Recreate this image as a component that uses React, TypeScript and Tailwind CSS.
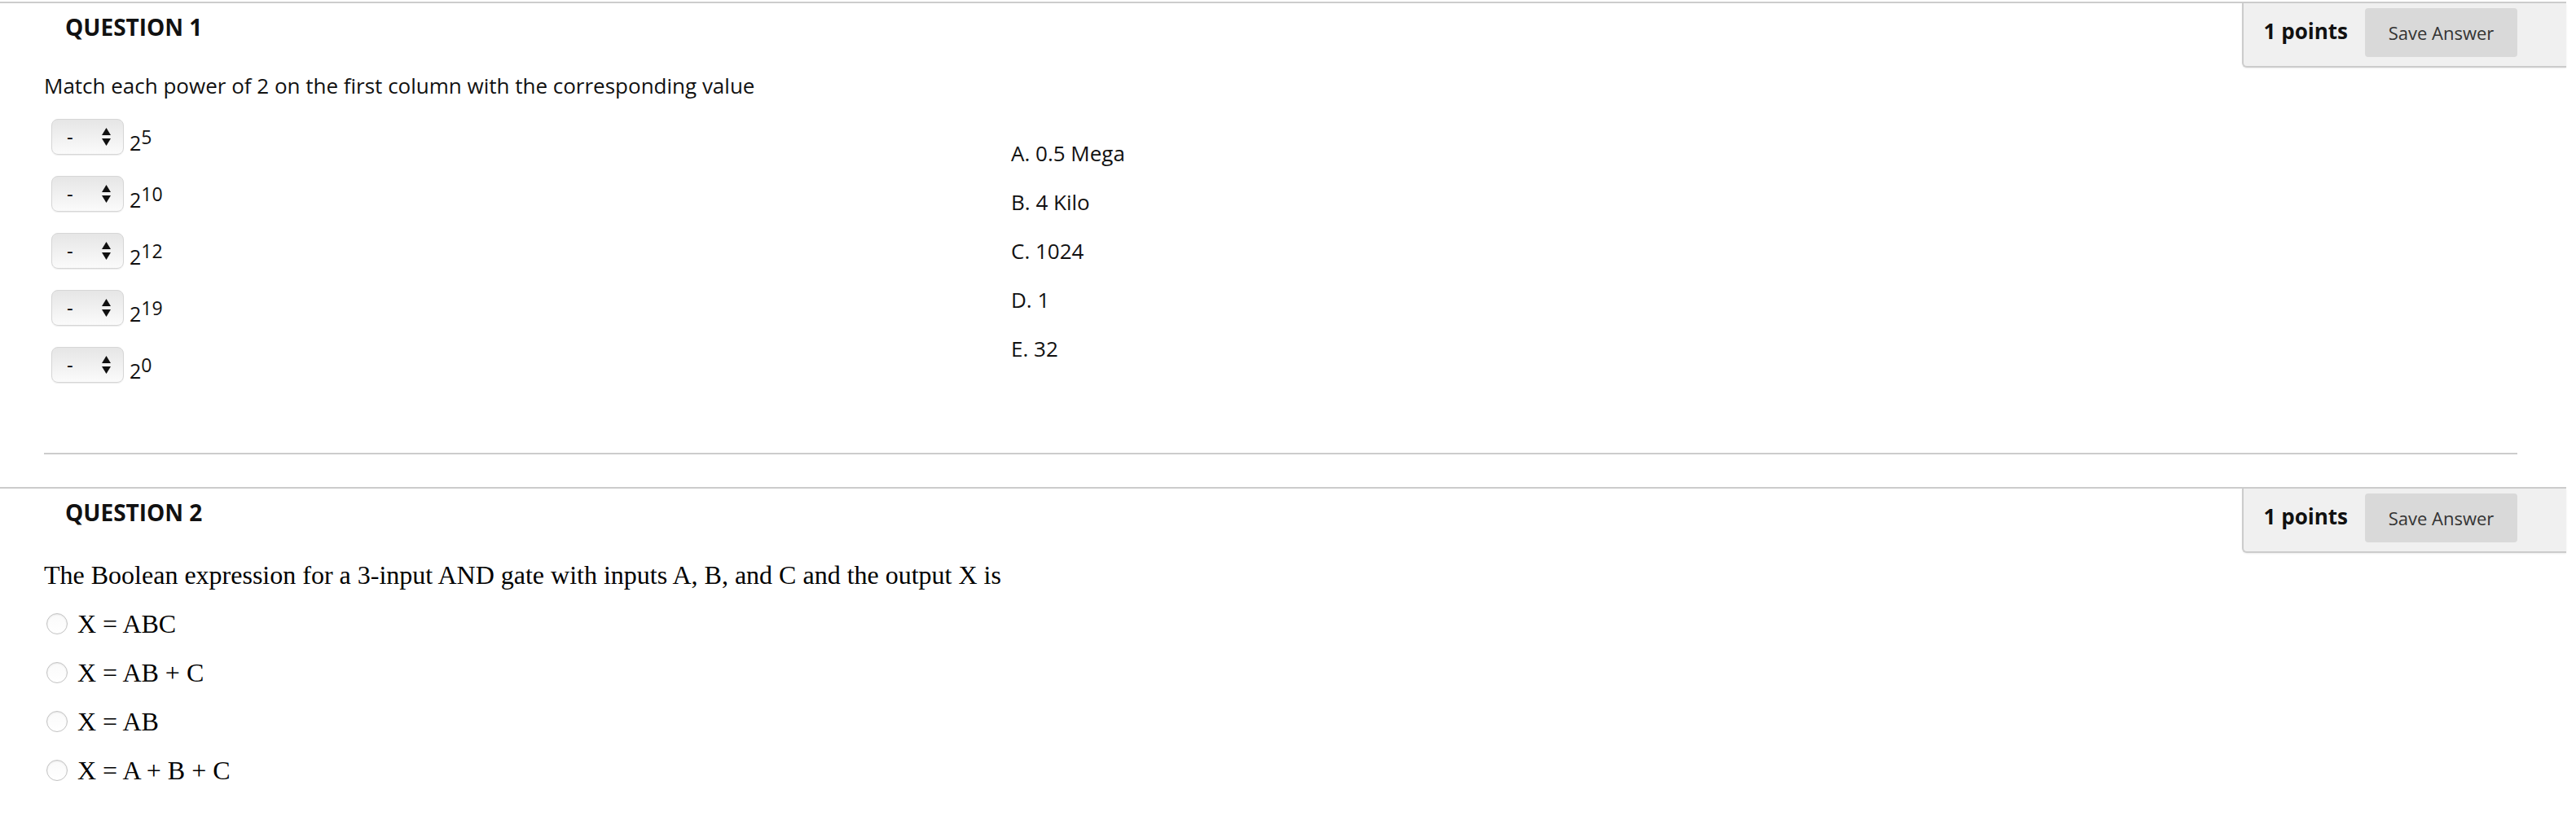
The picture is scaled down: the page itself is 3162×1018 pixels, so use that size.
const powers = ["5", "10", "12", "19", "0"];
const answers = ["A. 0.5 Mega", "B. 4 Kilo", "C. 1024", "D. 1", "E. 32"];
const options = ["X = ABC", "X = AB + C", "X = AB", "X = A + B + C"];

function PointsPanel() {
  return (
    <div className="flex h-[79px] items-start rounded-bl-[6px] border-b-2 border-l-2 border-[#cccccc] bg-[#f0f0f0] pl-[25px] pr-[60px] pt-[6px] shadow-[0_1px_2px_rgba(0,0,0,0.08)]">
      <span className="mt-[10px] text-[26px] font-bold leading-[36px] text-[#111]">
        1 points
      </span>
      <button className="ml-[21px] flex h-[60px] w-[187px] items-center justify-center rounded-[4px] bg-[#d9d9d9] text-[22px] text-[#333]">
        Save Answer
      </button>
    </div>
  );
}

function QuestionHeader({ n }: { n: number }) {
  return (
    <div className="flex h-[79px] items-start justify-between">
      <h2 className="pl-[80px] pt-[11px] text-[28px] font-bold leading-[36px] text-[#111]">
        QUESTION {n}
      </h2>
      <PointsPanel />
    </div>
  );
}

function FakeSelect() {
  return (
    <div className="flex h-[44px] w-[89px] items-center justify-between rounded-[8px] border border-[#d6d6d6] bg-gradient-to-b from-[#e6e6e6] to-[#fbfbfb] pl-[18px] pr-[15px] shadow-[0_1px_1px_rgba(0,0,0,0.08)]">
      <span className="text-[24px] leading-none text-black">-</span>
      <svg width="11" height="22" viewBox="0 0 11 22">
        <path d="M5.5 0 L11 9 L0 9 Z" fill="#111" />
        <path d="M0 13 L11 13 L5.5 22 Z" fill="#111" />
      </svg>
    </div>
  );
}

function Radio() {
  return (
    <span className="ml-[3px] mr-[12px] inline-block h-[26px] w-[26px] rounded-full border border-[#c2c2c2] bg-gradient-to-b from-[#fafafa] to-white shadow-[inset_0_1px_2px_rgba(0,0,0,0.08)]" />
  );
}

export default function App() {
  return (
    <div className="w-[3150px] bg-white pt-[2px] font-['Open_Sans',sans-serif]">
      {/* question 1 */}
      <section className="border-t-2 border-[#cccccc]">
        <QuestionHeader n={1} />
        <div className="mr-[60px] pl-[54px]">
          <p className="mt-[5px] text-[26px] leading-[34px] text-[#111]">
            Match each power of 2 on the first column with the corresponding value
          </p>
          <div className="mt-[24px] flex items-center">
            <div className="flex w-[1187px] flex-col gap-[26px] pl-[9px]">
              {powers.map((p) => (
                <div key={p} className="flex h-[44px] items-center">
                  <FakeSelect />
                  <span className="ml-[7px] mt-[14px] text-[25px] leading-[34px] text-[#111]">
                    2<sup className="-top-[8px] text-[23px]">{p}</sup>
                  </span>
                </div>
              ))}
            </div>
            <div className="flex flex-col gap-[26px]">
              {answers.map((a) => (
                <div key={a} className="text-[26px] leading-[34px] text-[#111]">
                  {a}
                </div>
              ))}
            </div>
          </div>
          <div className="mt-[86px] border-t-2 border-[#cccccc]" />
        </div>
      </section>

      {/* question 2 */}
      <section className="mt-[40px] border-t-2 border-[#cccccc]">
        <QuestionHeader n={2} />
        <div className="pl-[54px] font-['Liberation_Serif','Times_New_Roman',serif] text-[32px] leading-[36px] text-black">
          <p className="mt-[9px]">
            The Boolean expression for a 3-input AND gate with inputs A, B, and C and the output X is
          </p>
          <div className="mt-[24px] flex flex-col gap-[24px]">
            {options.map((o) => (
              <label key={o} className="flex h-[36px] items-center">
                <Radio />
                <span>{o}</span>
              </label>
            ))}
          </div>
        </div>
        <div className="h-[60px]" />
      </section>
    </div>
  );
}
